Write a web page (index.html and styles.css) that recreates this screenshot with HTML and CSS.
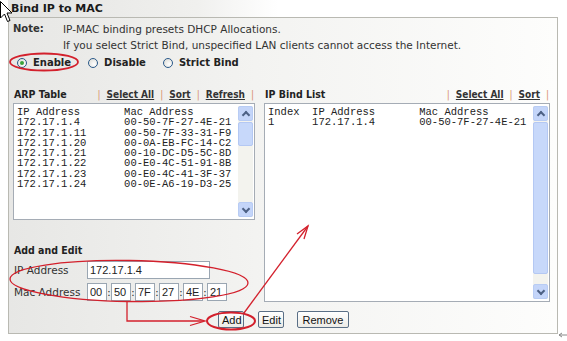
FILE: index.html
```html
<!DOCTYPE html>
<html lang="en">
<head>
    <meta charset="UTF-8">
    <title>Bind IP to MAC</title>
    <link rel="stylesheet" href="styles.css">
</head>
<body>
    <div class="page">
        <div class="title-tab">Bind IP to MAC</div>

        <div class="panel">
            <div class="note">
                <span class="note-label">Note:</span>
                <div class="note-text">
                    <p>IP-MAC binding presets DHCP Allocations.</p>
                    <p>If you select Strict Bind, unspecified LAN clients cannot access the Internet.</p>
                </div>
            </div>

            <div class="modes">
                <label class="mode"><span class="radio checked"></span>Enable</label>
                <label class="mode"><span class="radio"></span>Disable</label>
                <label class="mode"><span class="radio"></span>Strict Bind</label>
            </div>

            <div class="columns">
                <div class="col-left">
                    <div class="list-head">
                        <span class="list-title">ARP Table</span>
                        <span class="links">
                            <span class="sep">|</span><a href="#">Select All</a><span class="sep">|</span><a href="#">Sort</a><span class="sep">|</span><a href="#">Refresh</a><span class="sep">|</span>
                        </span>
                    </div>
                    <div class="listbox arp">
<pre class="rows">IP Address       Mac Address
172.17.1.4       00-50-7F-27-4E-21
172.17.1.11      00-50-7F-33-31-F9
172.17.1.20      00-0A-EB-FC-14-C2
172.17.1.21      00-10-DC-D5-5C-8D
172.17.1.22      00-E0-4C-51-91-8B
172.17.1.23      00-E0-4C-41-3F-37
172.17.1.24      00-0E-A6-19-D3-25</pre>
                        <div class="scrollbar">
                            <span class="arrow up"></span>
                            <span class="thumb short"></span>
                            <span class="track"></span>
                            <span class="arrow down"></span>
                        </div>
                    </div>

                    <div class="add-edit">
                        <div class="list-title">Add and Edit</div>
                        <div class="field">
                            <span class="field-label">IP Address</span>
                            <input class="text-input ip" type="text" value="172.17.1.4">
                        </div>
                        <div class="field">
                            <span class="field-label">Mac Address</span>
                            <div class="mac">
                                <input class="text-input octet" type="text" value="00"><span class="colon">:</span>
                                <input class="text-input octet" type="text" value="50"><span class="colon">:</span>
                                <input class="text-input octet" type="text" value="7F"><span class="colon">:</span>
                                <input class="text-input octet" type="text" value="27"><span class="colon">:</span>
                                <input class="text-input octet" type="text" value="4E"><span class="colon">:</span>
                                <input class="text-input octet" type="text" value="21">
                            </div>
                        </div>
                    </div>
                </div>

                <div class="col-right">
                    <div class="list-head">
                        <span class="list-title">IP Bind List</span>
                        <span class="links">
                            <span class="sep">|</span><a href="#">Select All</a><span class="sep">|</span><a href="#">Sort</a><span class="sep">|</span>
                        </span>
                    </div>
                    <div class="listbox bind">
<pre class="rows">Index  IP Address       Mac Address
1      172.17.1.4       00-50-7F-27-4E-21</pre>
                        <div class="scrollbar">
                            <span class="arrow up"></span>
                            <span class="thumb long"></span>
                            <span class="track"></span>
                            <span class="arrow down"></span>
                        </div>
                    </div>
                </div>
            </div>

            <div class="buttons">
                <button class="btn">Add</button>
                <button class="btn">Edit</button>
                <button class="btn wide">Remove</button>
            </div>
        </div>

        <!-- red hand-drawn annotations -->
        <svg class="marks" viewBox="0 0 567 341">
            <g fill="none" stroke="#d3202c" stroke-width="1.3">
                <ellipse cx="44" cy="62" rx="34" ry="8.5" stroke-width="1.8"/>
                <ellipse cx="129" cy="281" rx="119" ry="20.5" transform="rotate(1 129 281)"/>
                <ellipse cx="231" cy="321" rx="24" ry="8.5" stroke-width="2"/>
                <path d="M127 302 V321 H204"/>
                <path d="M190 316.5 L205 321 L190 325.5"/>
                <path d="M244 313 L308 226"/>
                <path d="M297 234 L308 226 L304 239"/>
            </g>
            <path d="M559 335 H567 M559 335 L562 333 M559 335 L562 337" stroke="#888" stroke-width="1" fill="none"/>
        </svg>

        <svg class="cursor" viewBox="0 0 13 22">
            <path d="M0.5 0.5 V17 L4.5 13 L7.5 20.5 L10 19.5 L7 12 H12 Z" fill="#fff" stroke="#000" stroke-width="1"/>
        </svg>
    </div>
</body>
</html>
```

FILE: styles.css
```css
* {
    margin: 0;
    padding: 0;
    box-sizing: border-box;
}

body {
    background: #ffffff;
    font-family: "DejaVu Sans", Verdana, sans-serif;
    font-size: 10.5px;
    color: #222;
}

.page {
    position: relative;
    width: 567px;
    height: 341px;
    padding-left: 8px;
}

.title-tab {
    width: 270px;
    height: 17px;
    padding: 1px 0 0 3px;
    font-weight: bold;
    font-size: 11px;
    line-height: 15px;
    color: #1a1a1a;
    background: linear-gradient(to right, #e4e4e2, #f0f0ee 70%, #ffffff);
}

.panel {
    width: 550px;
    height: 317px;
    border: 1px solid #b9b9b2;
    background: linear-gradient(to right, #e7e7e5, #f3f3f1 45%, #fdfdfc);
    padding: 3px 0 0 4px;
}

.note {
    display: flex;
    line-height: 16px;
}

.note-label {
    width: 50px;
    font-weight: bold;
    font-size: 10px;
    color: #333;
}

.note-text {
    color: #333;
}

.modes {
    display: flex;
    margin: 1px 0 0 4px;
    height: 17px;
    align-items: center;
}

.mode {
    display: flex;
    align-items: center;
    gap: 6px;
    margin-right: 17px;
    font-weight: bold;
    font-size: 10px;
    color: #222;
}

.radio {
    width: 10px;
    height: 10px;
    border-radius: 50%;
    border: 1px solid #2b5a8a;
    background: radial-gradient(circle at 65% 65%, #ffffff, #d8d8d2);
    display: flex;
    align-items: center;
    justify-content: center;
}

.radio.checked::after {
    content: "";
    width: 4px;
    height: 4px;
    border-radius: 50%;
    background: #3aa23a;
}

.columns {
    display: flex;
    gap: 9px;
    margin-top: 15px;
}

.col-left {
    width: 242px;
}

.col-right {
    width: 286px;
}

.list-head {
    display: flex;
    justify-content: space-between;
    align-items: center;
    height: 16px;
    padding: 0 1px 0 1px;
}

.list-title {
    font-family: "DejaVu Sans Condensed", "DejaVu Sans", sans-serif;
    font-weight: bold;
    font-size: 10.5px;
    color: #222;
}

.links {
    display: flex;
    gap: 6px;
    font-family: "DejaVu Sans Condensed", "DejaVu Sans", sans-serif;
    font-weight: bold;
    font-size: 10px;
}

.links a {
    color: #333;
    text-decoration: underline;
}

.sep {
    color: #d8906e;
    font-weight: normal;
}

.listbox {
    display: flex;
    background: #fff;
    border: 1px solid #a5acb5;
    margin-top: 1px;
}

.listbox.arp {
    height: 117px;
}

.listbox.bind {
    height: 199px;
}

.rows {
    flex: 1;
    font-family: "Liberation Mono", "Courier New", monospace;
    font-size: 10.5px;
    line-height: 10.3px;
    color: #222;
    padding: 3px 0 0 3px;
}

.scrollbar {
    width: 15px;
    margin: 2px 1px 2px 0;
    display: flex;
    flex-direction: column;
    background: #f3f3ee;
}

.arrow {
    height: 15px;
    background: #c4d5f9;
    border: 1px solid #b8ccf4;
    border-radius: 2px;
    display: flex;
    align-items: center;
    justify-content: center;
}

.arrow::after {
    content: "";
    width: 4px;
    height: 4px;
    border: solid #4d6185;
    border-width: 2px 2px 0 0;
}

.arrow.up::after {
    transform: translateY(1px) rotate(-45deg);
}

.arrow.down::after {
    transform: translateY(-1px) rotate(135deg);
}

.thumb {
    background: #c7d8fa;
    border: 1px solid #b4c8f3;
    border-radius: 2px;
    margin-top: 1px;
}

.thumb.short {
    height: 24px;
}

.thumb.long {
    height: 152px;
}

.track {
    flex: 1;
}

.add-edit {
    margin-top: 24px;
}

.add-edit .list-title {
    display: block;
    margin: 0 0 3px 1px;
    height: 12px;
}

.field {
    display: flex;
    align-items: center;
    height: 22px;
}

.field-label {
    width: 74px;
    padding-left: 1px;
    color: #333;
}

.text-input {
    height: 18px;
    border: 1px solid #9aa6b2;
    background: #fff;
    font-family: "Liberation Sans", Arial, sans-serif;
    font-size: 11px;
    color: #222;
    padding: 0 2px;
}

.text-input.ip {
    width: 123px;
}

.mac {
    display: flex;
    align-items: center;
}

.text-input.octet {
    width: 20px;
}

.colon {
    width: 4px;
    text-align: center;
    font-size: 10px;
}

.buttons {
    display: flex;
    gap: 13px;
    margin: 8px 0 0 205px;
}

.btn {
    height: 17px;
    padding: 0 3px;
    border: 1px solid #5a6f86;
    border-radius: 2px;
    background: linear-gradient(#ffffff, #ecebe6);
    font-family: "Liberation Sans", Arial, sans-serif;
    font-size: 11px;
    color: #111;
}

.btn:nth-child(1) {
    width: 26px;
    margin-right: 1px;
}

.btn:nth-child(2) {
    width: 26px;
}

.btn.wide {
    width: 52px;
}

.marks {
    position: absolute;
    left: 0;
    top: 0;
    width: 567px;
    height: 341px;
    pointer-events: none;
}

.cursor {
    position: absolute;
    left: 0;
    top: 1px;
    width: 13px;
    height: 22px;
}
```
